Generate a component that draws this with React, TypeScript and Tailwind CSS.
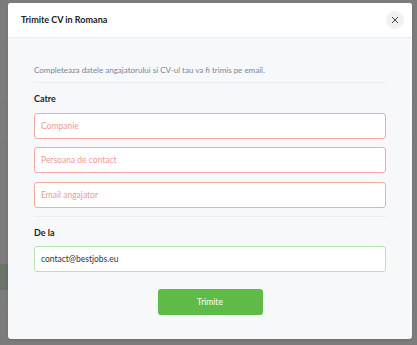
import React from "react";

const font = { fontFamily: "'Lato', 'Noto Sans', sans-serif" };

function Field({ placeholder, value, ok }: { placeholder?: string; value?: string; ok?: boolean }) {
  return (
    <input
      readOnly
      value={value}
      placeholder={placeholder}
      className={
        ok
          ? "h-[26px] w-full rounded-[3px] border border-[#b9e2ae] bg-white px-[6px] text-[8.5px] text-[#333] outline-none"
          : "h-[26px] w-full rounded-[3px] border border-[#f2aaa2] bg-white px-[6px] text-[8.5px] outline-none placeholder:text-[#ec9b90]"
      }
    />
  );
}

export default function App() {
  return (
    <div className="relative h-[345px] w-[417px] overflow-hidden bg-[#f4f4f4]" style={font}>
      {/* page behind the overlay */}
      <div className="flex flex-col pt-[30px]">
        <div className="h-[14px] border-b border-[#ddd]" />
        <div className="h-[60px] border-b border-[#ddd]" />
        <div className="h-[40px] border-b border-[#ddd]" />
        <div className="mt-[120px] h-[26px] w-[40px] bg-[#3a9a2a]" />
        <div className="mt-[20px] border-b border-[#ddd]" />
      </div>

      <div className="absolute inset-0 bg-[#6f6f6f]/90 pt-[3px] pl-[8px]">
        <div className="flex h-[336px] w-[404px] flex-col overflow-hidden rounded-[3px] bg-[#f7f8fa] shadow">
          <div className="flex h-[35px] items-center justify-between border-b border-[#eceef1] bg-white pl-[13px] pr-[8px]">
            <h2 className="text-[9px] font-bold text-[#222]">Trimite CV in Romana</h2>
            <button className="flex h-[18px] w-[18px] items-center justify-center rounded-full bg-[#f0f1f3] text-[#444]">
              <svg width="8" height="8" viewBox="0 0 8 8" fill="none" stroke="currentColor" strokeWidth="1">
                <path d="M1 1l6 6M7 1L1 7" />
              </svg>
            </button>
          </div>

          <div className="flex flex-col px-[26px] pt-[26px]">
            <p className="pb-[6px] text-[8px] text-[#7b8496]">
              Completeaza datele angajatorului si CV-ul tau va fi trimis pe email.
            </p>
            <div className="border-t border-[#eceef1]" />
            <h3 className="pt-[9px] pb-[7px] text-[9px] font-bold text-[#222]">Catre</h3>
            <div className="flex flex-col gap-[8.5px]">
              <Field placeholder="Companie" />
              <Field placeholder="Persoana de contact" />
              <Field placeholder="Email angajator" />
            </div>
            <div className="mt-[8px] border-t border-[#eceef1]" />
            <h3 className="pt-[9px] pb-[7px] text-[9px] font-bold text-[#222]">De la</h3>
            <Field value="contact@bestjobs.eu" ok />
            <div className="flex justify-center pt-[17px]">
              <button className="h-[26px] w-[105px] rounded-[3px] bg-[#5fba47] text-[8.5px] text-white">Trimite</button>
            </div>
          </div>
        </div>
      </div>
    </div>
  );
}
